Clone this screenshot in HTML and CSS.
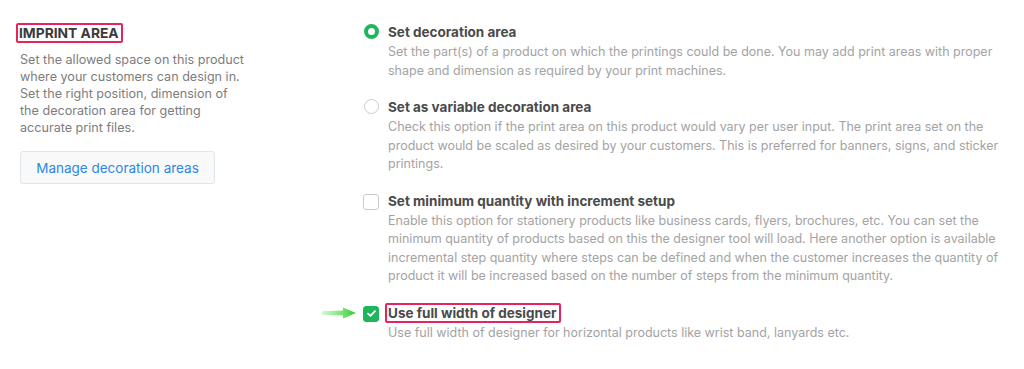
FILE: index.html
```html
<!DOCTYPE html>
<html lang="en">
<head>
  <meta charset="UTF-8">
  <title>Imprint Area</title>
  <link rel="stylesheet" href="styles.css">
</head>
<body>
  <div class="settings">
    <div class="intro">
      <h2 class="intro-title"><span class="mark">IMPRINT AREA</span></h2>
      <p class="intro-text">Set the allowed space on this product where your customers can design in. Set the right position, dimension of the decoration area for getting accurate print files.</p>
      <button class="btn-manage">Manage decoration areas</button>
    </div>

    <div class="options">
      <div class="option">
        <span class="radio checked"></span>
        <div class="option-body">
          <div class="option-title">Set decoration area</div>
          <p class="option-text">Set the part(s) of a product on which the printings could be done. You may add print areas with proper shape and dimension as required by your print machines.</p>
        </div>
      </div>

      <div class="option">
        <span class="radio"></span>
        <div class="option-body">
          <div class="option-title">Set as variable decoration area</div>
          <p class="option-text">Check this option if the print area on this product would vary per user input. The print area set on the product would be scaled as desired by your customers. This is preferred for banners, signs, and sticker printings.</p>
        </div>
      </div>

      <div class="option">
        <span class="checkbox"></span>
        <div class="option-body">
          <div class="option-title">Set minimum quantity with increment setup</div>
          <p class="option-text">Enable this option for stationery products like business cards, flyers, brochures, etc. You can set the minimum quantity of products based on this the designer tool will load. Here another option is available incremental step quantity where steps can be defined and when the customer increases the quantity of product it will be increased based on the number of steps from the minimum quantity.</p>
        </div>
      </div>

      <div class="option">
        <svg class="arrow" width="34" height="12" viewBox="0 0 34 12">
          <defs>
            <linearGradient id="arrowFade" x1="0" x2="1" y1="0" y2="0">
              <stop offset="0" stop-color="#5be85b" stop-opacity="0.3"/>
              <stop offset="1" stop-color="#2ecc2e"/>
            </linearGradient>
          </defs>
          <path d="M0 4.2 L21 3.6 L21 0.5 L34 6 L21 11.5 L21 8.4 L0 7.8 Z" fill="url(#arrowFade)"/>
        </svg>
        <span class="checkbox checked">
          <svg width="9" height="7" viewBox="0 0 9 7"><path d="M1 3.6 L3.4 5.8 L8 1.2" fill="none" stroke="#fff" stroke-width="1.7" stroke-linecap="round" stroke-linejoin="round"/></svg>
        </span>
        <div class="option-body">
          <div class="option-title"><span class="mark">Use full width of designer</span></div>
          <p class="option-text">Use full width of designer for horizontal products like wrist band, lanyards etc.</p>
        </div>
      </div>
    </div>
  </div>
</body>
</html>
```

FILE: styles.css
```css
body {
  margin: 0;
  background: #fff;
  font-family: Inter, 'Open Sans', sans-serif;
  color: #4a4a4a;
}

.settings {
  display: flex;
  padding: 22px 0 0 20px;
}

.intro {
  width: 240px;
  flex-shrink: 0;
}

.intro-title {
  margin: 1px 0 8px;
  font-size: 13.8px;
  font-weight: 700;
  line-height: 20px;
  color: #3a3a3a;
}

.mark {
  border: 2px solid #e5245f;
  border-radius: 2px;
  padding: 0 2px 0 1px;
  margin-left: -4px;
}

.intro-text {
  max-width: 228px;
  margin: 0 0 15px;
  font-size: 12.6px;
  line-height: 17px;
  color: #7d7d7d;
}

.btn-manage {
  width: 195px;
  height: 33px;
  border: 1px solid #e1e4e8;
  border-radius: 3px;
  background: #f8f9fa;
  color: #2d86e6;
  font-family: inherit;
  font-size: 13.5px;
}

.options {
  margin-left: 103px;
  width: 650px;
}

.option {
  display: flex;
  align-items: flex-start;
  position: relative;
  margin-bottom: 17px;
}

.option-body {
  flex: 1;
}

.option-title {
  font-size: 13.5px;
  font-weight: 700;
  line-height: 20px;
  color: #4a4a4a;
  margin-bottom: 1px;
}

.option-title .mark {
  margin-left: -3px;
}

.option-text {
  margin: 0;
  font-size: 12.5px;
  line-height: 18.5px;
  color: #a3a3a3;
}

.radio {
  width: 13px;
  height: 13px;
  border: 1px solid #c8ccd1;
  border-radius: 50%;
  margin: 2px 9px 0 1px;
  flex-shrink: 0;
  background: #fff;
}

.radio.checked {
  width: 7px;
  height: 7px;
  border: 4px solid #1fb55c;
}

.checkbox {
  width: 14px;
  height: 14px;
  border: 1px solid #c8ccd1;
  border-radius: 3px;
  margin: 3px 9px 0 0;
  flex-shrink: 0;
  display: flex;
  align-items: center;
  justify-content: center;
}

.checkbox.checked {
  background: #1fb55c;
  border-color: #1fb55c;
}

.arrow {
  position: absolute;
  left: -41px;
  top: 4px;
}
```
